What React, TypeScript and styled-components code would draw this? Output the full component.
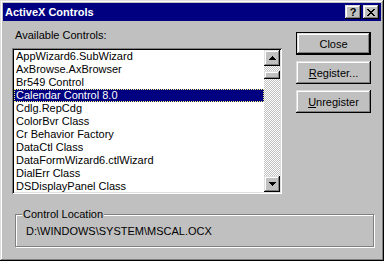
import React from 'react';
import styled, { createGlobalStyle } from 'styled-components';

const CONTROLS = [
  'AppWizard6.SubWizard',
  'AxBrowse.AxBrowser',
  'Br549 Control',
  'Calendar Control 8.0',
  'Cdlg.RepCdg',
  'ColorBvr Class',
  'Cr Behavior Factory',
  'DataCtl Class',
  'DataFormWizard6.ctlWizard',
  'DialErr Class',
  'DSDisplayPanel Class',
];

const SELECTED = 3;

const GlobalStyle = createGlobalStyle`
  html, body {
    margin: 0;
    padding: 0;
    background: #c0c0c0;
  }
  body {
    font-family: "Liberation Sans", Arial, sans-serif;
    font-size: 11px;
    color: #000;
  }
`;

const raised = `
  box-shadow: inset -1px -1px #000, inset 1px 1px #dfdfdf, inset -2px -2px #808080, inset 2px 2px #fff;
`;

const Window = styled.div`
  width: 384px;
  height: 261px;
  box-sizing: border-box;
  padding: 3px;
  background: #c0c0c0;
  display: flex;
  flex-direction: column;
  ${raised}
`;

const TitleBar = styled.div`
  height: 18px;
  background: #000080;
  display: flex;
  align-items: center;
  justify-content: space-between;
  padding: 0 2px 0 2px;
`;

const Title = styled.span`
  color: #fff;
  font-weight: bold;
  font-size: 11px;
  line-height: 13px;
`;

const CaptionButtons = styled.div`
  display: flex;
  gap: 2px;
`;

const CaptionButton = styled.div`
  width: 16px;
  height: 14px;
  box-sizing: border-box;
  background: #c0c0c0;
  display: flex;
  align-items: center;
  justify-content: center;
  font-weight: bold;
  font-size: 11px;
  line-height: 14px;
  ${raised}
`;

const Body = styled.div`
  flex: 1;
  padding: 8px 10px 10px 9px;
  display: flex;
  flex-direction: column;
`;

const TopRow = styled.div`
  display: flex;
  gap: 14px;
`;

const LeftColumn = styled.div`
  width: 270px;
  display: flex;
  flex-direction: column;
`;

const Label = styled.div`
  line-height: 13px;
  padding-left: 3px;
  margin-bottom: 6px;
`;

const ListBox = styled.div`
  height: 146px;
  box-sizing: border-box;
  padding: 2px;
  background: #fff;
  display: flex;
  box-shadow: inset 1px 1px #808080, inset -1px -1px #fff, inset 2px 2px #000, inset -2px -2px #dfdfdf;
`;

const List = styled.div`
  flex: 1;
  overflow: hidden;
`;

const Item = styled.div<{ selected?: boolean }>`
  height: 13px;
  line-height: 13px;
  padding-left: 2px;
  white-space: nowrap;
  background: ${p => (p.selected ? '#000080' : 'transparent')};
  color: ${p => (p.selected ? '#fff' : '#000')};
  outline: ${p => (p.selected ? '1px dotted #ffff80' : 'none')};
  outline-offset: -1px;
`;

const ScrollBar = styled.div`
  width: 16px;
  display: flex;
  flex-direction: column;
`;

const ScrollButton = styled.div`
  width: 16px;
  height: 16px;
  box-sizing: border-box;
  background: #c0c0c0;
  display: flex;
  align-items: center;
  justify-content: center;
  ${raised}
`;

const Track = styled.div`
  flex: 1;
  background: repeating-conic-gradient(#c0c0c0 0 25%, #fff 0 50%) 0 0 / 2px 2px;
`;

const Thumb = styled.div`
  margin-top: 5px;
  height: 8px;
  background: #c0c0c0;
  ${raised}
`;

const ButtonColumn = styled.div`
  margin-top: 3px;
  display: flex;
  flex-direction: column;
  gap: 6px;
`;

const Button = styled.div<{ isDefault?: boolean }>`
  width: 75px;
  height: 23px;
  box-sizing: border-box;
  display: flex;
  align-items: center;
  justify-content: center;
  background: #c0c0c0;
  border: ${p => (p.isDefault ? '1px solid #000' : 'none')};
  ${raised}
`;

const GroupBox = styled.div`
  position: relative;
  margin-top: 20px;
  margin-left: 3px;
  width: 359px;
  box-sizing: border-box;
  border: 1px solid #808080;
  box-shadow: inset 1px 1px #fff, 1px 1px #fff;
  padding: 10px 10px 8px 10px;
  line-height: 13px;
`;

const Legend = styled.span`
  position: absolute;
  top: -7px;
  left: 6px;
  padding: 0 1px;
  line-height: 13px;
  background: #c0c0c0;
`;

const Arrow = ({ up }: { up?: boolean }) => (
  <svg width="7" height="4" viewBox="0 0 7 4" shapeRendering="crispEdges">
    {[0, 1, 2, 3].map(i => {
      const row = up ? i : 3 - i;
      return <rect key={i} x={3 - row} y={i} width={row * 2 + 1} height={1} fill="#000" />;
    })}
  </svg>
);

const CloseGlyph = () => (
  <svg width="8" height="7" viewBox="0 0 8 7" shapeRendering="crispEdges">
    {[0, 1, 2, 3, 4, 5, 6].map(y => {
      const d = y <= 3 ? y : 6 - y;
      return (
        <g key={y}>
          <rect x={d} y={y} width={2} height={1} fill="#000" />
          <rect x={6 - d} y={y} width={2} height={1} fill="#000" />
        </g>
      );
    })}
  </svg>
);

const App: React.FC = () => (
  <>
    <GlobalStyle />
    <Window>
      <TitleBar>
        <Title>ActiveX Controls</Title>
        <CaptionButtons>
          <CaptionButton>?</CaptionButton>
          <CaptionButton>
            <CloseGlyph />
          </CaptionButton>
        </CaptionButtons>
      </TitleBar>
      <Body>
        <TopRow>
          <LeftColumn>
            <Label>Available Controls:</Label>
            <ListBox>
              <List>
                {CONTROLS.map((name, i) => (
                  <Item key={name} selected={i === SELECTED}>
                    {name}
                  </Item>
                ))}
              </List>
              <ScrollBar>
                <ScrollButton>
                  <Arrow up />
                </ScrollButton>
                <Track>
                  <Thumb />
                </Track>
                <ScrollButton>
                  <Arrow />
                </ScrollButton>
              </ScrollBar>
            </ListBox>
          </LeftColumn>
          <ButtonColumn>
            <Button isDefault>Close</Button>
            <Button>
              <span><u>R</u>egister...</span>
            </Button>
            <Button>
              <span><u>U</u>nregister</span>
            </Button>
          </ButtonColumn>
        </TopRow>
        <GroupBox>
          <Legend>Control Location</Legend>
          D:\WINDOWS\SYSTEM\MSCAL.OCX
        </GroupBox>
      </Body>
    </Window>
  </>
);

export default App;
